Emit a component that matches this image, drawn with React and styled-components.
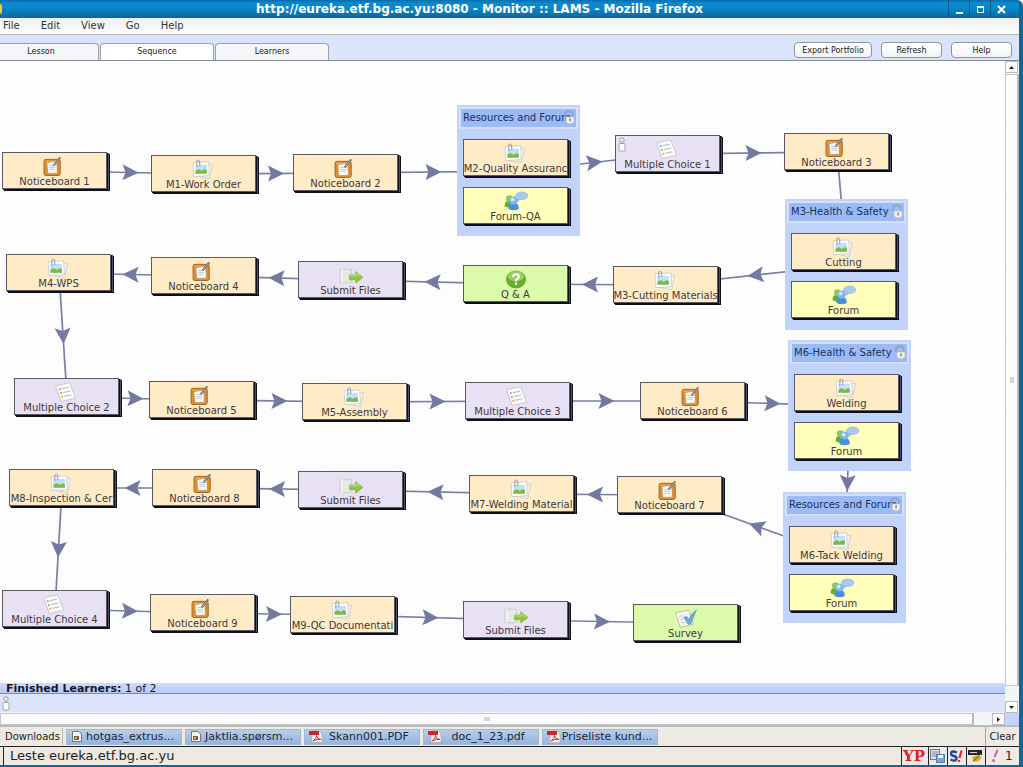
import React from 'react';
import styled, { createGlobalStyle } from 'styled-components';

const GlobalStyle = createGlobalStyle`
  * {
    box-sizing: border-box;
  }
  body {
    margin: 0;
    background: #fff;
    font-family: "DejaVu Sans", Verdana, sans-serif;
    color: #222;
  }
  button {
    font-family: inherit;
    color: inherit;
    margin: 0;
    padding: 0;
  }
`

/* Window frame */

const Window = styled.div`
  display: flex;
  flex-direction: column;
  height: 100vh;
  border-right: 4px solid #0e6699;
  border-bottom: 2px solid #17658f;
  border-top-right-radius: 6px;
  overflow: hidden;
  background: #0e6699;
`

const TitleBar = styled.header`
  flex: none;
  height: 18px;
  display: flex;
  align-items: center;
  padding-right: 8px;
  background: linear-gradient(#0a6aa8 0, #0a8ad0 3px, #0a88cc 8px, #0b669b 100%);
  color: #fff;
`

const AppDot = styled.span`
  width: 2px;
  height: 10px;
  border-radius: 0 5px 5px 0;
  background: #f2c83a;
`

const Title = styled.h1`
  flex: 1;
  margin: 0;
  padding-left: 9px;
  text-align: center;
  font-size: 12px;
  line-height: 18px;
  font-weight: bold;
`

const WindowButtons = styled.div`
  display: flex;
`

const WindowButton = styled.button`
  width: 21px;
  height: 18px;
  border: 0;
  border-left: 1px solid #0a5a8c;
  background: transparent;
  display: flex;
  align-items: center;
  justify-content: center;
`

const MenuBar = styled.nav`
  flex: none;
  display: flex;
  gap: 21px;
  height: 17px;
  padding-left: 3px;
  align-items: center;
  background: linear-gradient(#efefef, #fff);
  border-bottom: 1px solid #b4b4b8;
`

const MenuItem = styled.button`
  border: 0;
  background: none;
  font-size: 10px;
  line-height: 14px;
  color: #333;
`

const Toolbar = styled.div`
  flex: none;
  display: flex;
  align-items: flex-end;
  justify-content: space-between;
  height: 26px;
  background: #dae4fb;
  border-bottom: 1px solid #878b94;
`

const Tabs = styled.div`
  display: flex;
  gap: 1px;
`

const Tab = styled.button`
  width: ${props => props.$first ? '99px' : '114px'};
  height: 17px;
  padding-right: ${props => props.$first ? '16px' : '0'};
  border: 1px solid #9a9fa8;
  border-width: ${props => props.$first ? '1px 1px 0 0' : '1px 1px 0 1px'};
  border-radius: ${props => props.$first ? '0 4px 0 0' : '4px 4px 0 0'};
  background: ${props => props.$active ? '#fff' : '#f5f6f7'};
  font-size: 8px;
  line-height: 14px;
`

const ToolButtons = styled.div`
  display: flex;
  gap: 9px;
  padding: 0 7px 2px 0;
`

const ToolButton = styled.button`
  width: ${props => props.$wide ? '78px' : '61px'};
  height: 16px;
  border: 1px solid #8e939c;
  border-radius: 4px;
  background: linear-gradient(#fff, #f3f4f6);
  font-size: 8px;
  line-height: 13px;
`

/* Main area */

const Main = styled.main`
  flex: 1;
  min-height: 0;
  display: grid;
  grid-template-columns: minmax(0, 1fr) 14px;
  grid-template-rows: minmax(0, 1fr) 12px;
`

const Content = styled.div`
  display: flex;
  flex-direction: column;
  min-height: 0;
`

const Canvas = styled.div`
  flex: 1;
  min-height: 0;
  position: relative;
  overflow: hidden;
  background-color: #fdfdfd;
  background-image: radial-gradient(circle, #e6e6e6 0, #fdfdfd 1px);
  background-size: 9px 9px;
`

const Wires = styled.svg`
  position: absolute;
  left: 0;
  top: 0;
  width: 100%;
  height: 100%;
`

const Placed = styled.div.attrs(props => ({
  style: { left: props.$x, top: props.$y },
}))`
  position: absolute;
`

const fills = {
  notice: '#ffecc6',
  share: '#ffecc6',
  choice: '#e8e1f3',
  submit: '#e8e1f3',
  qa: '#dcfbaa',
  survey: '#dcfbaa',
  forum: '#ffffbb',
}

const Card = styled.div`
  position: relative;
  width: 105px;
  height: 37px;
  padding-top: 3px;
  border: 1px solid #5b5860;
  background: ${props => fills[props.$kind]};
  box-shadow: 1px 1px 0 #0d0e1c, 2px 1px 0 #4c5068, 2px 2px 0 #0d0e1c, 3px 2px 0 #0d0e1c;
  display: flex;
  flex-direction: column;
  align-items: center;
`

const CardLabel = styled.div`
  white-space: nowrap;
  font-size: 10px;
  line-height: 12px;
  color: #40383c;
`

const Corner = styled.div`
  position: absolute;
  left: 2px;
  top: 1px;
  display: flex;
`

const Group = styled.section`
  width: 123px;
  height: 131px;
  padding: 2px;
  background: #c1d2fb;
`

const GroupHeader = styled.div`
  height: 22px;
  margin-bottom: 10px;
  border: 2px solid #d3e0f8;
  background: #9cbbf5;
  display: flex;
  align-items: center;
`

const GroupTitle = styled.h2`
  margin: 0;
  padding-left: 2px;
  white-space: nowrap;
  font-size: 10px;
  line-height: 14px;
  font-weight: normal;
  color: #16305e;
`

const Lock = styled.div`
  position: absolute;
  right: 5px;
  top: 5px;
  display: flex;
`

const GroupBody = styled.div`
  display: flex;
  flex-direction: column;
  gap: 11px;
  padding-left: 4px;
`

const Learners = styled.section`
  flex: none;
  background: #dbe4fb;
`

const LearnersHead = styled.div`
  height: 11px;
  padding-left: 6px;
  border-bottom: 1px solid #858b9c;
  background: linear-gradient(#cfdbfc, #b9cafa);
  font-size: 11px;
  line-height: 11px;
  color: #16182a;
`

const LearnersBody = styled.div`
  height: 19px;
  padding: 2px;
  border-bottom: 1px solid #f4f4f6;
`

const Scroll = styled.div`
  display: flex;
  flex-direction: ${props => props.$across ? 'row' : 'column'};
  justify-content: space-between;
  gap: ${props => props.$across ? '18px' : '0'};
  background: #f4f5f7;
`

const ScrollButton = styled.button`
  flex: none;
  width: 13px;
  height: 12px;
  border: 1px solid #b7bac4;
  background: #fdfdfd;
  display: flex;
  align-items: center;
  justify-content: center;
`

const Thumb = styled.div`
  flex: 1;
  display: flex;
  align-items: center;
  justify-content: center;
  margin: ${props => props.$across ? '0' : '1px 0 15px 0'};
  border: 1px solid #c4c6cc;
  border-right: 2px solid #b6b9c2;
  background: #fcfcfd;
`

const Grip = styled.span`
  width: ${props => props.$across ? '6px' : '4px'};
  height: ${props => props.$across ? '4px' : '6px'};
  background: #d4d6dc;
`

const ScrollCorner = styled.div`
  background: #c3d3fb;
`

/* Footer bars */

const Downloads = styled.div`
  flex: none;
  display: flex;
  align-items: center;
  gap: 3px;
  height: 21px;
  border-top: 2px solid #bdbbb6;
  background: #ede9e3;
  font-size: 10px;
`

const DownloadsLabel = styled.span`
  width: 63px;
  padding-left: 5px;
  border-right: 1px solid #bfbcb6;
  line-height: 18px;
`

const Download = styled.button`
  display: flex;
  align-items: center;
  width: 116px;
  height: 16px;
  padding-left: 4px;
  border: 1px solid #a5b9d4;
  background: linear-gradient(#b9cde9, #94b5e0);
  font-size: 11px;
  line-height: 14px;
  color: #1d2536;
`

const DownloadName = styled.span`
  flex: 1;
  padding-right: 4px;
  text-align: center;
  white-space: nowrap;
`

const Clear = styled.button`
  margin-left: auto;
  width: 34px;
  height: 19px;
  border: 0;
  border-left: 1px solid #a8a6a0;
  background: none;
  font-size: 10px;
`

const StatusBar = styled.footer`
  flex: none;
  display: flex;
  gap: 2px;
  height: 19px;
  padding: 0 1px 0 3px;
  border-top: 1px solid #222;
  background: #ede9e3;
`

const StatusCell = styled.div`
  flex: ${props => props.$w ? 'none' : '1'};
  width: ${props => props.$w ? props.$w + 'px' : 'auto'};
  padding-left: ${props => props.$w ? '0' : '6px'};
  border-left: 1px solid #222;
  display: flex;
  align-items: center;
  justify-content: ${props => props.$w ? 'space-evenly' : 'flex-start'};
  font-size: ${props => props.$w ? '12px' : '13px'};
  line-height: 16px;
`

const Yp = styled.span`
  font-family: "DejaVu Serif", serif;
  font-weight: bold;
  font-size: 15px;
  color: #e21f26;
`

/* Icons */

const NoticeIcon = () => (
  <svg width="26" height="21" viewBox="0 0 26 21">
    <rect x="1.500" y="3.500" width="17" height="17" rx="2" fill="#dc8f2e" stroke="#a8621a" />
    <rect x="3" y="5" width="14" height="1" fill="#f4bd68" />
    <path d="M4.500 7 L13 5.500 L15 8 L15.500 18 L5.500 18.500 Z" fill="#f8f8f5" stroke="#a98d70" strokeWidth=".6" />
    <path d="M7 10h5M7 12h6M7 14h6" stroke="#b9bcc4" strokeWidth=".8" />
    <path d="M11.500 10 L18.500 1.500" stroke="#6d6f78" strokeWidth="2.200" />
    <path d="M11.500 10 L17.500 2.500" stroke="#b7bac2" strokeWidth=".8" />
  </svg>
)

const ShareIcon = () => (
  <svg width="26" height="21" viewBox="0 0 26 21">
    <path d="M6 3 L22 6 L19 20.500 L4 18 Z" fill="#f1f1f1" stroke="#c3c3c3" strokeWidth=".7" />
    <path d="M1.500 4 L18 3 L18.500 17.500 L2.500 18.500 Z" fill="#fff" stroke="#bdbdc2" strokeWidth=".7" />
    <rect x="4" y="6" width="12" height="9.500" fill="#c3e0f6" />
    <path d="M4 12.500 Q7.500 9 10.500 12.500 Q13.500 9.500 16 11.500 V15.500 H4 Z" fill="#7fb944" />
    <path d="M5.500 8.500 V2 Q7 0 8.500 2 V7.500" fill="none" stroke="#8e9cb4" strokeWidth="1" />
  </svg>
)

const ForumIcon = () => (
  <svg width="26" height="21" viewBox="0 0 26 21">
    <path d="M1 16 Q1 10 6 10 Q11 10 11 16 Q6 19 1 16Z" fill="#62ad3e" />
    <circle cx="6" cy="8" r="3.500" fill="#8cc963" />
    <path d="M5 19 Q5 12 10.500 12 Q16 12 16 19 Q10.500 21.500 5 19Z" fill="#4a90d6" />
    <circle cx="10.500" cy="10" r="4.200" fill="#7fb9ea" />
    <circle cx="9.500" cy="9" r="2" fill="#d2e8fa" />
    <path d="M14 8 L15 11.500 L18 8.500Z" fill="#8fb5e0" />
    <ellipse cx="19" cy="5" rx="6.500" ry="4" fill="#a9c9ee" stroke="#8fb3dd" strokeWidth=".6" />
  </svg>
)

const ChoiceIcon = () => (
  <svg width="26" height="21" viewBox="0 0 26 21">
    <path d="M1 4 L16 .8 L22 17 L7 20.500 Z" fill="#fbfbf8" stroke="#b8b4bd" strokeWidth=".7" />
    <path d="M7.500 7 l7.500-1.500 M9 11 l7.500-1.500 M10 15 l7.500-1.500" stroke="#a4adb8" strokeWidth=".9" />
    <circle cx="5.500" cy="7.500" r="1" fill="#5f9ddb" />
    <circle cx="6.700" cy="11.500" r="1" fill="#73b84b" />
    <circle cx="8" cy="15.500" r="1" fill="#e8a33b" />
  </svg>
)

const SubmitIcon = () => (
  <svg width="26" height="21" viewBox="0 0 26 21">
    <path d="M1.500 4.500 H13.500 V18.500 H1.500 Z" fill="#e6e8e4" stroke="#c4c9c0" strokeWidth=".8" />
    <path d="M3.500 4v15" stroke="#fff" />
    <path d="M11.500 10.500 H18 V7 L25.500 13 L18 19 V15.500 H11.500 Z" fill="#8cc63a" stroke="#70a62c" strokeWidth=".6" />
    <path d="M12 11.500 H19 V9 L23 12.300" fill="none" stroke="#c3e780" />
  </svg>
)

const QaIcon = () => (
  <svg width="22" height="21" viewBox="0 0 22 21">
    <ellipse cx="11" cy="11" rx="10.500" ry="9.500" fill="#68ad2c" />
    <ellipse cx="11" cy="7.500" rx="8.500" ry="5.500" fill="#9ad05e" />
    <path d="M8 8.500 Q8 5.500 11 5.500 Q14 5.500 14 8 Q14 10 11 11.500 V13" fill="none" stroke="#fff" strokeWidth="2" />
    <circle cx="11" cy="15.500" r="1.300" fill="#fff" />
  </svg>
)

const SurveyIcon = () => (
  <svg width="24" height="21" viewBox="0 0 24 21">
    <path d="M1 5 L15 2 L20 17 L6 20.500 Z" fill="#f7f4ee" stroke="#bcae9c" strokeWidth=".8" />
    <path d="M5 9 l4-1 M6 12 l3-.6 M7 15.500 l3-.6" stroke="#b9b9b9" />
    <path d="M9.500 9.500 L13 9 L15 12 Q18 5 23 2 Q20.500 8 17 17 L14 17 Z" fill="#6fa9d8" stroke="#4581b3" strokeWidth=".5" />
  </svg>
)

const PersonIcon = () => (
  <svg width="8" height="15" viewBox="0 0 8 15">
    <circle cx="4" cy="3" r="2.200" fill="#f7f7f7" stroke="#8c8c92" strokeWidth=".9" />
    <rect x="1" y="6.500" width="6" height="7.500" rx="1" fill="#fff" stroke="#9a9aa0" strokeWidth=".9" />
  </svg>
)

const LockIcon = () => (
  <svg width="12" height="15" viewBox="0 0 12 15">
    <path d="M2 7 V4.500 Q2.500 1.200 6 1.200 Q10 1.500 10 7" fill="none" stroke="#8ea3c6" strokeWidth="1.800" />
    <path d="M3 7 H11 V12 Q7 15.800 3 12 Z" fill="#f1f1ee" stroke="#b9bcc6" strokeWidth=".7" />
    <path d="M6 8.500 h2.200 l-.6 3.200 h-1 z" fill="#9a917c" />
  </svg>
)

const icons = {
  notice: NoticeIcon,
  share: ShareIcon,
  forum: ForumIcon,
  choice: ChoiceIcon,
  submit: SubmitIcon,
  qa: QaIcon,
  survey: SurveyIcon,
}

const DocIcon = () => (
  <svg width="12" height="13" viewBox="0 0 12 13">
    <path d="M1.500 1.500 H8 L10.500 4 V11.500 H1.500 Z" fill="#f4f2ec" stroke="#77756e" />
    <rect x="3" y="6" width="5" height="4" fill="#6e6242" />
    <rect x="4" y="7" width="2" height="2" fill="#d8b24c" />
  </svg>
)

const PdfIcon = () => (
  <svg width="14" height="13" viewBox="0 0 14 13">
    <path d="M3 1 H10 L13 4 V12.500 H3 Z" fill="#f6f3f2" stroke="#a9a3a6" strokeWidth=".6" />
    <rect x="0" y="1" width="10" height="4" fill="#cf2229" />
    <path d="M4 11 Q8 8 7.500 5.500 Q8 9 12 9.500 Q8 8.500 4 11Z" fill="none" stroke="#d0353a" />
  </svg>
)

/* Sequence data, relative to the canvas */

const nodes = [
  { id: 'n1', kind: 'notice', label: 'Noticeboard 1', x: 2, y: 91 },
  { id: 'm1', kind: 'share', label: 'M1-Work Order', x: 151, y: 94 },
  { id: 'n2', kind: 'notice', label: 'Noticeboard 2', x: 293, y: 93 },
  { id: 'c1', kind: 'choice', label: 'Multiple Choice 1', x: 615, y: 74, learner: true },
  { id: 'n3', kind: 'notice', label: 'Noticeboard 3', x: 784, y: 72 },
  { id: 'm3', kind: 'share', label: 'M3-Cutting Materials', x: 613, y: 205 },
  { id: 'qa', kind: 'qa', label: 'Q & A', x: 463, y: 204 },
  { id: 's1', kind: 'submit', label: 'Submit Files', x: 298, y: 200 },
  { id: 'n4', kind: 'notice', label: 'Noticeboard 4', x: 151, y: 196 },
  { id: 'm4', kind: 'share', label: 'M4-WPS', x: 6, y: 193 },
  { id: 'c2', kind: 'choice', label: 'Multiple Choice 2', x: 14, y: 317 },
  { id: 'n5', kind: 'notice', label: 'Noticeboard 5', x: 149, y: 320 },
  { id: 'm5', kind: 'share', label: 'M5-Assembly', x: 302, y: 322 },
  { id: 'c3', kind: 'choice', label: 'Multiple Choice 3', x: 465, y: 321 },
  { id: 'n6', kind: 'notice', label: 'Noticeboard 6', x: 640, y: 321 },
  { id: 'n7', kind: 'notice', label: 'Noticeboard 7', x: 617, y: 415 },
  { id: 'm7', kind: 'share', label: 'M7-Welding Material', x: 469, y: 414 },
  { id: 's2', kind: 'submit', label: 'Submit Files', x: 298, y: 410 },
  { id: 'n8', kind: 'notice', label: 'Noticeboard 8', x: 152, y: 408 },
  { id: 'm8', kind: 'share', label: 'M8-Inspection & Cer', x: 9, y: 408 },
  { id: 'c4', kind: 'choice', label: 'Multiple Choice 4', x: 2, y: 529 },
  { id: 'n9', kind: 'notice', label: 'Noticeboard 9', x: 150, y: 533 },
  { id: 'm9', kind: 'share', label: 'M9-QC Documentati', x: 290, y: 535 },
  { id: 's3', kind: 'submit', label: 'Submit Files', x: 463, y: 540 },
  { id: 'sv', kind: 'survey', label: 'Survey', x: 633, y: 543 },
]

const groups = [
  { id: 'g1', title: 'Resources and Forum', x: 457, y: 44, items: [['share', 'M2-Quality Assuranc'], ['forum', 'Forum-QA']] },
  { id: 'g2', title: 'M3-Health & Safety', x: 785, y: 138, items: [['share', 'Cutting'], ['forum', 'Forum']] },
  { id: 'g3', title: 'M6-Health & Safety', x: 788, y: 279, items: [['share', 'Welding'], ['forum', 'Forum']] },
  { id: 'g4', title: 'Resources and Forum', x: 783, y: 431, items: [['share', 'M6-Tack Welding'], ['forum', 'Forum']] },
]

const order = [
  'n1', 'm1', 'n2', 'g1', 'c1', 'n3', 'g2', 'm3', 'qa', 's1', 'n4', 'm4', 'c2', 'n5', 'm5',
  'c3', 'n6', 'g3', 'g4', 'n7', 'm7', 's2', 'n8', 'm8', 'c4', 'n9', 'm9', 's3', 'sv',
]

const centers = {}
nodes.forEach(n => { centers[n.id] = [n.x + 53, n.y + 19] })
groups.forEach(g => { centers[g.id] = [g.x + 62, g.y + 66] })

const Wire = ({ from, to }) => {
  const [x1, y1] = centers[from]
  const [x2, y2] = centers[to]
  const angle = Math.atan2(y2 - y1, x2 - x1) * 180 / Math.PI
  return (
    <g>
      <line x1={x1} y1={y1} x2={x2} y2={y2} stroke="#797ea2" strokeWidth="1.700" />
      <path
        d="M9 0 L-7 -8 L-4 0 L-7 8 Z"
        fill="#7479a0"
        transform={`translate(${(x1 + x2) / 2} ${(y1 + y2) / 2}) rotate(${angle})`}
      />
    </g>
  )
}

const Activity = ({ kind, label, learner }) => {
  const Icon = icons[kind]
  return (
    <Card $kind={kind}>
      {learner && <Corner><PersonIcon /></Corner>}
      <Icon />
      <CardLabel>{label}</CardLabel>
    </Card>
  )
}

const Sequence = () => (
  <Canvas>
    <Wires>
      {order.slice(1).map((id, i) => <Wire key={id} from={order[i]} to={id} />)}
    </Wires>
    {nodes.map(n => (
      <Placed key={n.id} $x={n.x} $y={n.y}>
        <Activity kind={n.kind} label={n.label} learner={n.learner} />
      </Placed>
    ))}
    {groups.map(g => (
      <Placed key={g.id} $x={g.x} $y={g.y}>
        <Group>
          <GroupHeader>
            <GroupTitle>{g.title}</GroupTitle>
            <Lock><LockIcon /></Lock>
          </GroupHeader>
          <GroupBody>
            {g.items.map(([kind, label]) => <Activity key={kind} kind={kind} label={label} />)}
          </GroupBody>
        </Group>
      </Placed>
    ))}
  </Canvas>
)

const files = [
  ['doc', 'hotgas_extrus...'],
  ['doc', 'Jaktlia.spørsm...'],
  ['pdf', 'Skann001.PDF'],
  ['pdf', 'doc_1_23.pdf'],
  ['pdf', 'Priseliste kund...'],
]

const App = () => {
  return (
    <Window>
      <GlobalStyle />
      <TitleBar>
        <AppDot />
        <Title>http://eureka.etf.bg.ac.yu:8080 - Monitor :: LAMS - Mozilla Firefox</Title>
        <WindowButtons>
          <WindowButton aria-label="Minimize">
            <svg width="9" height="9"><path d="M1 8h7" stroke="#fff" strokeWidth="2" /></svg>
          </WindowButton>
          <WindowButton aria-label="Maximize">
            <svg width="9" height="9"><path d="M1.500 1v6.500h6V1" fill="none" stroke="#fff" /><path d="M1 2h7" stroke="#fff" strokeWidth="2" /></svg>
          </WindowButton>
          <WindowButton aria-label="Close">
            <svg width="9" height="9"><path d="M1 1l7 7M8 1l-7 7" stroke="#fff" strokeWidth="2" /></svg>
          </WindowButton>
        </WindowButtons>
      </TitleBar>
      <MenuBar>
        {['File', 'Edit', 'View', 'Go', 'Help'].map(m => <MenuItem key={m}>{m}</MenuItem>)}
      </MenuBar>
      <Toolbar>
        <Tabs role="tablist">
          <Tab role="tab" $first>Lesson</Tab>
          <Tab role="tab" aria-selected="true" $active>Sequence</Tab>
          <Tab role="tab">Learners</Tab>
        </Tabs>
        <ToolButtons>
          <ToolButton $wide>Export Portfolio</ToolButton>
          <ToolButton>Refresh</ToolButton>
          <ToolButton>Help</ToolButton>
        </ToolButtons>
      </Toolbar>
      <Main>
        <Content>
          <Sequence />
          <Learners>
            <LearnersHead><b>Finished Learners:</b> 1 of 2</LearnersHead>
            <LearnersBody><PersonIcon /></LearnersBody>
          </Learners>
        </Content>
        <Scroll>
          <ScrollButton aria-label="Scroll up">
            <svg width="5" height="3"><path d="M0 3L2.500 0L5 3Z" fill="#222" /></svg>
          </ScrollButton>
          <Thumb><Grip /></Thumb>
          <ScrollButton aria-label="Scroll down">
            <svg width="5" height="3"><path d="M0 0L2.500 3L5 0Z" fill="#222" /></svg>
          </ScrollButton>
        </Scroll>
        <Scroll $across>
          <Thumb $across><Grip $across /></Thumb>
          <ScrollButton aria-label="Scroll right">
            <svg width="3" height="5"><path d="M0 0L3 2.500L0 5Z" fill="#222" /></svg>
          </ScrollButton>
        </Scroll>
        <ScrollCorner />
      </Main>
      <Downloads>
        <DownloadsLabel>Downloads</DownloadsLabel>
        {files.map(([type, name]) => (
          <Download key={name}>
            {type === 'doc' ? <DocIcon /> : <PdfIcon />}
            <DownloadName>{name}</DownloadName>
          </Download>
        ))}
        <Clear>Clear</Clear>
      </Downloads>
      <StatusBar>
        <StatusCell>Leste eureka.etf.bg.ac.yu</StatusCell>
        <StatusCell $w={25}><Yp>YP</Yp></StatusCell>
        <StatusCell $w={17}>
          <svg width="15" height="14" viewBox="0 0 15 14">
            <rect x=".5" y=".5" width="9" height="10" fill="#d6dee8" stroke="#68788f" />
            <path d="M2 3h6M2 5h6M2 7h6" stroke="#7f90a8" />
            <rect x="6.500" y="5.500" width="8" height="8" fill="#7ba6dc" stroke="#4f7cb8" />
            <rect x="8" y="6" width="5" height="3" fill="#f3f6fa" />
          </svg>
        </StatusCell>
        <StatusCell $w={17}>
          <svg width="14" height="14" viewBox="0 0 14 14">
            <path d="M8 3.500Q2 1 2 4.500Q2 6.500 5 7Q8 8 7.500 10Q6.500 13 1.500 10.500" fill="none" stroke="#23489b" strokeWidth="2.400" />
            <path d="M12.500 1.500L10.500 9M10 11v2" stroke="#e02a2a" strokeWidth="2.200" />
          </svg>
        </StatusCell>
        <StatusCell $w={17}>
          <svg width="15" height="14" viewBox="0 0 15 14">
            <rect x="0" y="1" width="14" height="5" fill="#25262c" />
            <path d="M2 3.500h7" stroke="#ddd" />
            <path d="M4 8L8 6.500L14 8L11 12L6 13Z" fill="#d9a52a" />
            <path d="M13 5L5 12" stroke="#6b5520" />
          </svg>
        </StatusCell>
        <StatusCell $w={33}>
          <svg width="8" height="14" viewBox="0 0 8 14">
            <path d="M6.500 1L3.500 8" stroke="#c768b8" strokeWidth="2" />
            <circle cx="2.500" cy="11.500" r="1.500" fill="#c768b8" />
          </svg>
          <span>1</span>
        </StatusCell>
      </StatusBar>
    </Window>
  )
}

export default App;
